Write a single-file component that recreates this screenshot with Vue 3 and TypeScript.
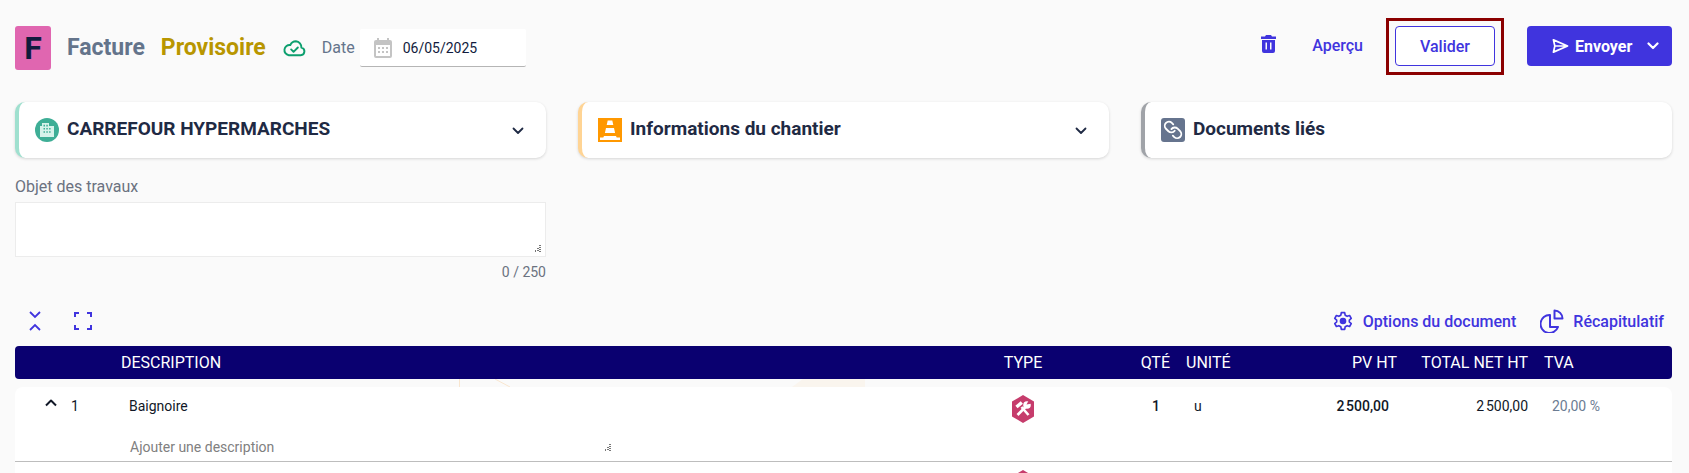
<script setup lang="ts">
interface Column { label: string; cls: string }
const columns: Column[] = [
  { label: '', cls: '' },
  { label: 'DESCRIPTION', cls: '' },
  { label: 'TYPE', cls: 'center' },
  { label: 'QTÉ', cls: 'right' },
  { label: 'UNITÉ', cls: 'pad-left' },
  { label: 'PV HT', cls: 'right' },
  { label: 'TOTAL NET HT', cls: 'right' },
  { label: 'TVA', cls: 'pad-left' },
]
const price = '2\u202f500,00'
</script>

<template>
  <div class="page">
    <header class="topbar">
      <div class="doc-badge">F</div>
      <span class="doc-type">Facture</span>
      <span class="doc-status">Provisoire</span>
      <svg class="cloud" viewBox="0 0 24 18" fill="none" stroke="currentColor" stroke-width="2" stroke-linejoin="round" stroke-linecap="round">
        <path d="M6 16.500h12.500a4 4 0 0 0 .7-7.900A6.200 6.200 0 0 0 13.500 2 6.500 6.500 0 0 0 7.600 6a5.300 5.300 0 0 0-1.600 10.500z" />
        <path d="M8.500 10.500l2.500 2.500 4.500-4.500" />
      </svg>
      <span class="date-label">Date</span>
      <div class="date-input">
        <svg class="calendar" viewBox="0 0 18 20">
          <path fill="#c4c4c4" d="M3 0h2v2h8V0h2v2h1a2 2 0 0 1 2 2v14a2 2 0 0 1-2 2H2a2 2 0 0 1-2-2V4a2 2 0 0 1 2-2h1zM2 7v11h14V7z" />
          <path fill="#c4c4c4" d="M4 9h2v2H4zm4 0h2v2H8zm4 0h2v2h-2zM4 13h2v2H4zm4 0h2v2H8zm4 0h2v2h-2z" />
        </svg>
        <span>06/05/2025</span>
      </div>
      <div class="spacer"></div>
      <svg class="trash" viewBox="0 0 15 18">
        <path fill="currentColor" d="M5 0h5l1 1.500h4V4H0V1.500h4zM1 5h13v11a2 2 0 0 1-2 2H3a2 2 0 0 1-2-2zm3.500 2.500v7H6v-7zm4.500 0v7h1.500v-7z" />
      </svg>
      <span class="preview">Aperçu</span>
      <div class="validate-wrap">
        <button class="validate">Valider</button>
        <div class="highlight"></div>
      </div>
      <button class="send">
        <svg class="send-icon" viewBox="0 0 18 16" fill="none" stroke="currentColor" stroke-width="1.800" stroke-linejoin="round">
          <path d="M1.500 1.500L16.500 8 1.500 14.500 3 8zM3 8h13" />
        </svg>
        <span>Envoyer</span>
        <svg class="send-chevron" viewBox="0 0 12 8" fill="none" stroke="currentColor" stroke-width="2.200" stroke-linecap="round" stroke-linejoin="round">
          <path d="M1.500 1.500L6 6l4.500-4.500" />
        </svg>
      </button>
    </header>

    <section class="cards">
      <div class="card card-green">
        <svg class="card-icon" viewBox="0 0 24 24">
          <circle cx="12" cy="12" r="12" fill="#3eae96" />
          <path fill="#d6f2ea" d="M7 5h7v3h5v11H5V8h2zm1.500 1.800v1.600H10V6.800zm2.800 0v1.600h1.500V6.800zM8.500 10v1.600H10V10zm2.800 0v1.600h1.500V10zm2.800 0v1.600h1.500V10zM8.500 13.200v1.600H10v-1.600zm2.800 0v1.600h1.500v-1.600zm2.800 0v1.600h1.500v-1.600z" />
        </svg>
        <span class="card-title">CARREFOUR HYPERMARCHES</span>
        <svg class="chevron" viewBox="0 0 12 8" fill="none" stroke="currentColor" stroke-width="1.800" stroke-linecap="round" stroke-linejoin="round"><path d="M1.500 1.500L6 6l4.500-4.500" /></svg>
      </div>
      <div class="card card-orange">
        <svg class="card-icon" viewBox="0 0 24 24">
          <rect width="24" height="24" fill="#ff9800" />
          <path fill="#fff" d="M9.700 2.500h4.600l1 4.500H8.700zM8 10h8l1.100 5H6.900zM6 18h12l.7 1.500H22V22H2v-2.500h3.300z" />
        </svg>
        <span class="card-title">Informations du chantier</span>
        <svg class="chevron" viewBox="0 0 12 8" fill="none" stroke="currentColor" stroke-width="1.800" stroke-linecap="round" stroke-linejoin="round"><path d="M1.500 1.500L6 6l4.500-4.500" /></svg>
      </div>
      <div class="card card-grey">
        <svg class="card-icon" viewBox="0 0 24 24">
          <rect width="24" height="24" rx="3" fill="#66748e" />
          <g fill="none" stroke="#fff" stroke-width="2.200" stroke-linecap="round" stroke-linejoin="round" transform="translate(22 2) scale(-0.83 0.83)">
            <path d="M10 13a5 5 0 0 0 7.540.54l3-3a5 5 0 0 0-7.070-7.070l-1.720 1.710" />
            <path d="M14 11a5 5 0 0 0-7.540-.54l-3 3a5 5 0 0 0 7.070 7.070l1.710-1.710" />
          </g>
        </svg>
        <span class="card-title">Documents liés</span>
      </div>
    </section>

    <section class="object">
      <div class="object-label">Objet des travaux</div>
      <div class="object-box">
        <svg class="grip" viewBox="0 0 7 7"><path fill="#777" d="M5 0h2v1H5zM5 2h2v1H5zM3 3h2v1H3zM5 4h2v1H5zM3 5h2v1H3zM1 5h1v1H1zM5 6h2v1H5zM1 6h1v1H1z" /></svg>
      </div>
      <div class="object-count">0 / 250</div>
    </section>

    <section class="toolbar">
      <svg class="collapse-icon" viewBox="0 0 12 20" fill="none" stroke="currentColor" stroke-width="1.800">
        <path d="M1 1l5 5 5-5M1 19l5-5 5 5" />
      </svg>
      <svg class="expand-icon" viewBox="0 0 18 18" fill="none" stroke="currentColor" stroke-width="2">
        <path d="M1 5V1h4M13 1h4v4M17 13v4h-4M5 17H1v-4" />
      </svg>
      <div class="spacer"></div>
      <svg class="gear" viewBox="0 0 24 24" fill="none" stroke="currentColor" stroke-width="2" stroke-linejoin="round">
        <path d="M10 2h4l.6 3 2.400 1.400 2.900-1 2 3.500-2.300 2v2.200l2.300 2-2 3.500-2.900-1-2.400 1.400-.6 3h-4l-.6-3L7 17.600l-2.900 1-2-3.500 2.300-2v-2.200l-2.300-2 2-3.500 2.900 1L9.400 5z" />
        <circle cx="12" cy="12" r="3" fill="currentColor" />
      </svg>
      <span class="tool-link options">Options du document</span>
      <svg class="pie" viewBox="0 0 24 24" fill="none" stroke="currentColor" stroke-width="2" stroke-linejoin="round">
        <path d="M10 6a9 9 0 1 0 8 12h-8z" />
        <path d="M14.500 1.500v8h8a8 8 0 0 0-8-8z" />
      </svg>
      <span class="tool-link">Récapitulatif</span>
    </section>

    <section class="table">
      <div class="thead lines">
        <div v-for="c in columns" :key="c.label" :class="c.cls">{{ c.label }}</div>
      </div>
      <svg class="watermark" viewBox="0 0 1657 8" preserveAspectRatio="none">
        <path d="M444.500 0v8" stroke="#f9e6cf" fill="none" />
        <path d="M480 0l15 8" stroke="#f9e6cf" fill="none" />
        <path d="M777 8l11-8h62v8z" fill="#faf5ee" />
      </svg>
      <div class="row lines">
        <div class="handle">
          <svg class="row-chevron" viewBox="0 0 12 8" fill="none" stroke="currentColor" stroke-width="2" stroke-linejoin="round"><path d="M1 6.500L6 1.500l5 5" /></svg>
          <span>1</span>
        </div>
        <div class="cell-desc">Baignoire</div>
        <div class="center type-cell">
          <svg class="hex" viewBox="0 0 24 28">
            <path fill="#c63c6c" d="M12 0l11 6.500v15L12 28 1 21.500v-15z" />
            <path d="M10.500 12L17.500 20" stroke="#fff" stroke-width="2.600" fill="none" />
            <path d="M5.500 12L10.800 7.500" stroke="#fff" stroke-width="3.400" fill="none" />
            <path d="M6.500 20L14.500 12" stroke="#fff" stroke-width="2.600" fill="none" />
            <circle cx="16" cy="10" r="3.800" fill="#fff" />
            <path d="M15.500 9.500L18 5l3 3.500z" fill="#c63c6c" />
          </svg>
        </div>
        <div class="right qty">1</div>
        <div class="pad-left unit">u</div>
        <div class="right price">{{ price }}</div>
        <div class="right total">{{ price }}</div>
        <div class="pad-left vat">20,00 %</div>
        <div class="row-sub">
          <span>Ajouter une description</span>
          <svg class="grip" viewBox="0 0 7 7"><path fill="#777" d="M5 0h2v1H5zM5 2h2v1H5zM3 3h2v1H3zM5 4h2v1H5zM3 5h2v1H3zM1 5h1v1H1zM5 6h2v1H5zM1 6h1v1H1z" /></svg>
        </div>
      </div>
      <div class="row next lines">
        <div></div>
        <div></div>
        <div class="center type-cell">
          <svg class="hex" viewBox="0 0 24 28"><path fill="#c63c6c" d="M12 0l11 6.500v15L12 28 1 21.500v-15z" /></svg>
        </div>
      </div>
    </section>
  </div>
</template>

<style scoped>
.page {
  box-sizing: border-box;
  height: 473px;
  overflow: hidden;
  padding: 26px 17px 0 15px;
  background: #fafafa;
  font-family: Roboto, "Liberation Sans", sans-serif;
  color: #111827;
}
.topbar {
  display: flex;
  align-items: flex-start;
  height: 44px;
}
.spacer { flex: 1; }
.doc-badge {
  width: 36px;
  height: 44px;
  border-radius: 3px;
  background: #e066b0;
  color: #111b3d;
  font-size: 32px;
  font-weight: 700;
  line-height: 44px;
  text-align: center;
}
.doc-type, .doc-status {
  font-size: 23px;
  font-weight: 700;
  line-height: 44px;
}
.doc-type { margin-left: 16px; color: #64748b; }
.doc-status { margin-left: 16px; color: #b89600; }
.cloud { width: 23px; height: 18px; margin: 13px 0 0 17px; color: #0c9f6e; }
.date-label { margin-left: 16px; font-size: 16px; line-height: 44px; color: #64748b; }
.date-input {
  box-sizing: border-box;
  display: flex;
  align-items: center;
  width: 166px;
  height: 38px;
  margin: 3px 0 0 5px;
  padding-left: 14px;
  background: #fff;
  border-bottom: 1px solid #b5b5b5;
  border-radius: 2px;
  font-size: 14px;
  color: #111b3d;
}
.calendar { width: 18px; height: 20px; margin-right: 11px; }
.trash { width: 15px; height: 18px; margin: 9px -1px 0 0; color: #4034de; }
.preview {
  margin-left: 37px;
  font-size: 16px;
  font-weight: 500;
  line-height: 40px;
  color: #4034de;
}
.validate-wrap { position: relative; margin-left: 32px; }
.validate {
  display: block;
  box-sizing: border-box;
  width: 100px;
  height: 40px;
  border: 1px solid #4034de;
  border-radius: 4px;
  background: #fff;
  color: #4034de;
  font: 500 16px Roboto, sans-serif;
}
.highlight {
  position: absolute;
  top: -8px;
  left: -9px;
  right: -9px;
  bottom: -9px;
  border: 3px solid #8b0000;
  pointer-events: none;
}
.send {
  display: flex;
  align-items: center;
  box-sizing: border-box;
  width: 145px;
  height: 40px;
  margin-left: 32px;
  padding: 0 0 0 25px;
  border: 0;
  border-radius: 4px;
  background: #4034de;
  color: #fff;
  font: 700 16px Roboto, sans-serif;
}
.send-icon { width: 17px; height: 16px; margin-right: 6px; }
.send-chevron { width: 12px; height: 8px; margin-left: 15px; }
.cards {
  display: grid;
  grid-template-columns: repeat(3, 1fr);
  gap: 32px;
  margin-top: 32px;
}
.card {
  box-sizing: border-box;
  display: flex;
  align-items: center;
  height: 56px;
  padding: 0 22px 4px 20px;
  background: #fff;
  border-left: 4px solid;
  border-radius: 10px;
  box-shadow: 0 1px 3px rgba(0, 0, 0, 0.15);
}
.card-green { border-left-color: #9fe0cf; }
.card-orange { border-left-color: #ffd494; }
.card-grey { border-left-color: #a0a3a8; }
.card-icon { flex: none; width: 24px; height: 24px; margin: 4px 8px 0 -4px; }
.card-title {
  flex: 1;
  font-size: 19px;
  font-weight: 700;
  color: #1f2a44;
}
.chevron { width: 12px; height: 8px; color: #1f2a44; margin-top: 5px; }
.object { width: 531px; margin-top: 18px; }
.object-label { font-size: 16px; line-height: 22px; color: #6b7280; }
.object-box {
  position: relative;
  box-sizing: border-box;
  height: 55px;
  margin-top: 4px;
  background: #fff;
  border: 1px solid #ececec;
}
.object-box .grip { position: absolute; right: 4px; bottom: 4px; }
.grip { width: 7px; height: 7px; }
.object-count {
  margin-top: 5px;
  font-size: 14px;
  line-height: 20px;
  text-align: right;
  color: #6b7280;
}
.toolbar {
  display: flex;
  align-items: center;
  height: 24px;
  margin-top: 27px;
  padding-right: 8px;
  color: #4034de;
}
.collapse-icon { width: 12px; height: 20px; margin-left: 14px; }
.expand-icon { width: 18px; height: 18px; margin-left: 33px; }
.gear { width: 20px; height: 20px; }
.pie { width: 24px; height: 24px; margin-left: 24px; }
.tool-link { margin-left: 9px; font-size: 16px; font-weight: 500; }
.options { margin-left: 10px; }
.lines {
  display: grid;
  grid-template-columns: 106px 869px 66px 114px 110px 117px 131px 144px;
}
.table { margin-top: 13px; }
.thead {
  height: 33px;
  align-items: center;
  background: #0a0070;
  border-radius: 4px;
  color: #fff;
  font-size: 16px;
  font-weight: 400;
}
.watermark { display: block; width: 100%; height: 8px; }
.center { text-align: center; }
.right { text-align: right; }
.pad-left { padding-left: 16px; }
.row {
  padding: 8px 0 3px;
  row-gap: 13px;
  background: #fff;
  border-bottom: 1px solid #bdbdbd;
  border-radius: 8px 8px 0 0;
  font-size: 14px;
  line-height: 22px;
  color: #111827;
}
.row.next { border: 0; border-radius: 0; height: 60px; }
.handle { display: flex; align-items: center; height: 22px; padding-left: 30px; }
.row-chevron { width: 12px; height: 8px; margin: -6px 14px 0 0; }
.cell-desc { padding-left: 8px; }
.type-cell { height: 28px; }
.hex { display: block; width: 24px; height: 28px; margin: 0 auto; }
.qty { padding-right: 10px; font-weight: 500; }
.unit { padding-left: 24px; }
.price { padding-right: 8px; font-weight: 500; }
.vat { padding-left: 24px; color: #6b7c93; font-size: 14px; }
.row-sub {
  grid-column: 2 / 4;
  display: flex;
  align-items: center;
  justify-content: space-between;
  width: 490px;
  padding-left: 9px;
  box-sizing: border-box;
  color: #808080;
}
</style>

<style>
html, body { background: #fafafa; }
</style>
